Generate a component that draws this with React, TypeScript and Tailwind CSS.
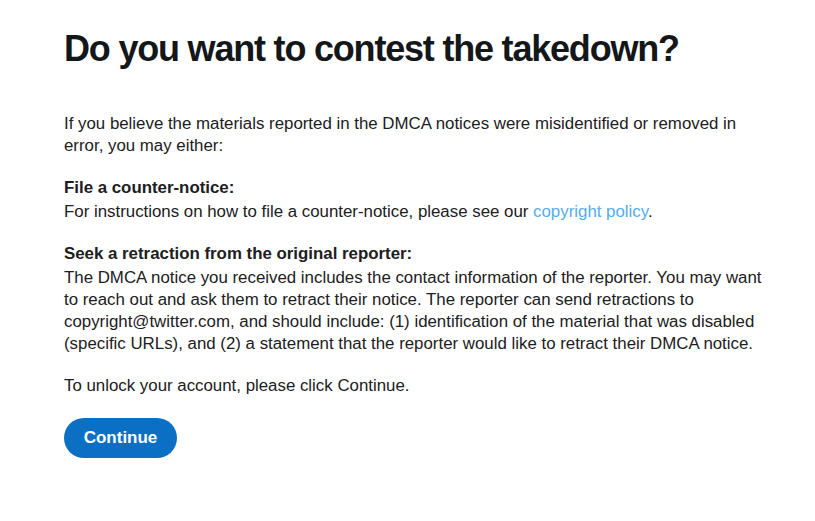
import React from 'react';

const App: React.FC = () => {
  return (
    <div className="min-h-screen bg-white font-['Liberation_Sans',Arial,sans-serif] text-[#1c2022]">
      <div className="w-[768px] pl-16 pt-[27px]">
        {/* Title */}
        <h1 className="text-[36px] font-bold leading-[44px] tracking-[-1.2px] text-[#14171a]">
          Do you want to contest the takedown?
        </h1>

        {/* Body */}
        <div className="mt-[42px] text-[16.85px] leading-[22px]">
          <p>
            If you believe the materials reported in the DMCA notices were misidentified or removed in
            error, you may either:
          </p>

          <p className="mt-[20px] font-bold">File a counter-notice:</p>
          <p className="mt-[2px]">
            For instructions on how to file a counter-notice, please see our{' '}
            <a href="#" className="text-[#55acee]">
              copyright policy
            </a>
            .
          </p>

          <p className="mt-[20px] font-bold">Seek a retraction from the original reporter:</p>
          <p className="mt-[2px]">
            The DMCA notice you received includes the contact information of the reporter. You may want
            to reach out and ask them to retract their notice. The reporter can send retractions to
            copyright@twitter.com, and should include: (1) identification of the material that was disabled
            (specific URLs), and (2) a statement that the reporter would like to retract their DMCA notice.
          </p>

          <p className="mt-[20px]">To unlock your account, please click Continue.</p>
        </div>

        {/* Action */}
        <button className="mt-[21px] h-10 w-[113px] rounded-full bg-[#0b6fc4] text-[17px] font-bold text-white">
          Continue
        </button>
      </div>
    </div>
  );
};

export default App;
